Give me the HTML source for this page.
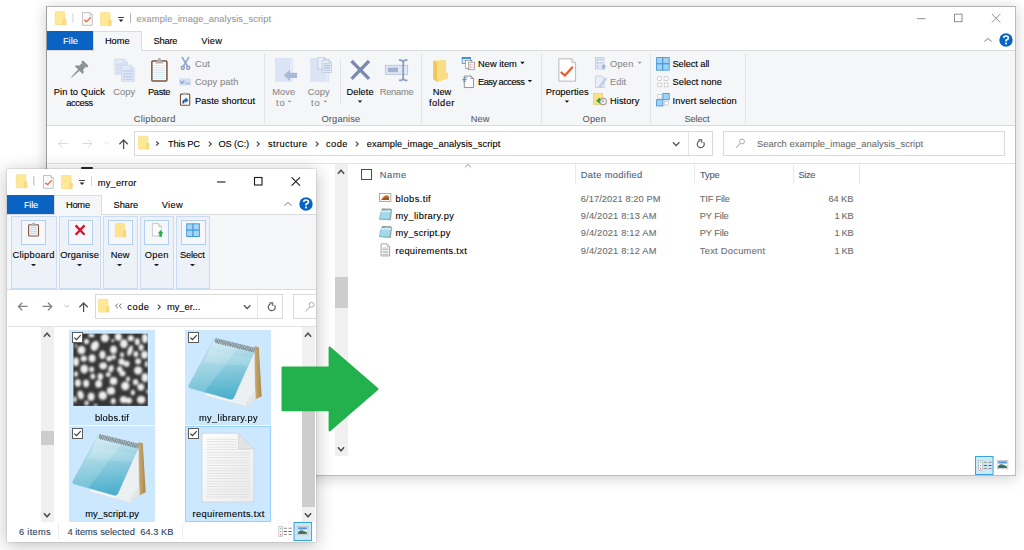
<!DOCTYPE html>
<html><head><meta charset="utf-8"><title>Explorer</title><style>
html,body{margin:0;padding:0;}
body{width:1024px;height:550px;background:#fff;position:relative;overflow:hidden;font-family:"Liberation Sans", sans-serif;font-size:12px;}
.a{position:absolute;box-sizing:border-box;}
.t{position:absolute;white-space:nowrap;line-height:14px;-webkit-text-stroke:0.1px currentColor;}
</style></head>
<body>
<div class="a" style="left:46px;top:6px;width:970px;height:470px;background:#fff;border:1px solid #bdbdbd;border-left-color:#9c9c9c;border-top-color:#b2b2b2;box-shadow:0 2px 14px 0 rgba(0,0,0,0.20);overflow:hidden;">
</div>
<span class="t" style="left:136.60px;top:12.03px;color:#999;font-size:9.3px;letter-spacing:0.097px;">example_image_analysis_script</span>
<svg class="a" style="left:0;top:0" width="1024" height="550" viewBox="0 0 1024 550" fill="none" stroke="#8f8f8f" stroke-width="1"><path d="M917 18.7 h8.5"/><rect x="954.5" y="14.2" width="7.5" height="7.5"/><path d="M992 14.0 l8.4 8.4 M1000.4 14.0 l-8.4 8.4"/></svg>
<svg class="a" style="left:997.7px;top:32.1px" width="16" height="16" viewBox="-8 -8 16 16"><circle r="6.7" fill="#0a63c2"/><path d="M-2.3 -1.9 Q-2.3 -4 0 -4 Q2.4 -4 2.4 -2 Q2.4 -0.6 0.1 0.2 V1.4" fill="none" stroke="#fff" stroke-width="1.7"/><circle cy="3.5" r="1.05" fill="#fff"/></svg>
<svg class="a" style="left:981.6px;top:34.1px" width="12" height="12" viewBox="-6 -6 12 12"><path d="M-3.6 1.6 L0 -1.6 L3.6 1.6" fill="none" stroke="#9a9a9a" stroke-width="1.1"/></svg>
<div class="a" style="left:47px;top:31px;width:46px;height:19px;background:#0a63c2;"></div>
<span class="t" style="left:62.90px;top:34.43px;color:#fff;font-size:9.3px;letter-spacing:0.004px;">File</span>
<div class="a" style="left:93px;top:31px;width:48.5px;height:20px;background:#f5f6f7;border:1px solid #dadbdc;border-bottom:none;z-index:2;"></div>
<span class="t" style="left:104.90px;top:34.43px;color:#000;font-size:9.3px;letter-spacing:-0.028px;z-index:3;">Home</span>
<span class="t" style="left:153.60px;top:34.43px;color:#000;font-size:9.3px;letter-spacing:-0.223px;">Share</span>
<span class="t" style="left:201.30px;top:34.43px;color:#000;font-size:9.3px;letter-spacing:0.229px;">View</span>
<div class="a" style="left:47px;top:50px;width:968px;height:76px;background:#f5f6f7;border-top:1px solid #dadbdc;border-bottom:1px solid #dadbdc;"></div>
<div class="a" style="left:263.5px;top:54px;width:1px;height:70px;background:#e2e3e4;"></div>
<div class="a" style="left:421px;top:54px;width:1px;height:70px;background:#e2e3e4;"></div>
<div class="a" style="left:540.5px;top:54px;width:1px;height:70px;background:#e2e3e4;"></div>
<div class="a" style="left:649.5px;top:54px;width:1px;height:70px;background:#e2e3e4;"></div>
<div class="a" style="left:744.5px;top:54px;width:1px;height:70px;background:#e2e3e4;"></div>
<div class="a" style="left:339.5px;top:59px;width:1px;height:45px;background:#e2e3e4;"></div>
<span class="t" style="left:53.75px;top:84.88px;color:#000;font-size:9.3px;letter-spacing:0.102px;">Pin to Quick</span>
<span class="t" style="left:66.25px;top:96.13px;color:#000;font-size:9.3px;letter-spacing:-0.431px;">access</span>
<span class="t" style="left:113.25px;top:84.88px;color:#8b8b8b;font-size:9.3px;letter-spacing:0.033px;">Copy</span>
<span class="t" style="left:148.00px;top:84.88px;color:#000;font-size:9.3px;letter-spacing:-0.336px;">Paste</span>
<span class="t" style="left:195.00px;top:56.88px;color:#8b8b8b;font-size:9.3px;letter-spacing:0.210px;">Cut</span>
<span class="t" style="left:195.00px;top:75.38px;color:#8b8b8b;font-size:9.3px;letter-spacing:0.134px;">Copy path</span>
<span class="t" style="left:195.00px;top:93.63px;color:#000;font-size:9.3px;letter-spacing:0.047px;">Paste shortcut</span>
<span class="t" style="left:133.75px;top:111.88px;color:#5f5f5f;font-size:9.3px;letter-spacing:0.228px;">Clipboard</span>
<span class="t" style="left:272.25px;top:84.88px;color:#8b8b8b;font-size:9.3px;letter-spacing:0.091px;">Move</span>
<span class="t" style="left:276.00px;top:96.13px;color:#8b8b8b;font-size:9.3px;letter-spacing:0.917px;">to</span>
<span class="t" style="left:307.75px;top:84.88px;color:#8b8b8b;font-size:9.3px;letter-spacing:0.033px;">Copy</span>
<span class="t" style="left:311.00px;top:96.13px;color:#8b8b8b;font-size:9.3px;letter-spacing:0.917px;">to</span>
<span class="t" style="left:346.50px;top:84.88px;color:#000;font-size:9.3px;letter-spacing:0.038px;">Delete</span>
<span class="t" style="left:379.75px;top:84.88px;color:#8b8b8b;font-size:9.3px;letter-spacing:-0.257px;">Rename</span>
<span class="t" style="left:321.50px;top:111.88px;color:#5f5f5f;font-size:9.3px;letter-spacing:0.139px;">Organise</span>
<span class="t" style="left:432.75px;top:84.88px;color:#000;font-size:9.3px;letter-spacing:-0.086px;">New</span>
<span class="t" style="left:429.00px;top:96.13px;color:#000;font-size:9.3px;letter-spacing:0.431px;">folder</span>
<span class="t" style="left:478.00px;top:56.88px;color:#000;font-size:9.3px;letter-spacing:0.013px;">New item</span>
<span class="t" style="left:478.00px;top:75.38px;color:#000;font-size:9.3px;letter-spacing:-0.531px;">Easy access</span>
<span class="t" style="left:470.75px;top:111.88px;color:#5f5f5f;font-size:9.3px;letter-spacing:-0.003px;">New</span>
<span class="t" style="left:545.75px;top:84.88px;color:#000;font-size:9.3px;letter-spacing:0.048px;">Properties</span>
<span class="t" style="left:610.00px;top:56.88px;color:#8b8b8b;font-size:9.3px;letter-spacing:0.213px;">Open</span>
<span class="t" style="left:610.00px;top:75.38px;color:#8b8b8b;font-size:9.3px;letter-spacing:0.017px;">Edit</span>
<span class="t" style="left:610.00px;top:93.63px;color:#000;font-size:9.3px;letter-spacing:0.059px;">History</span>
<span class="t" style="left:582.50px;top:111.88px;color:#5f5f5f;font-size:9.3px;letter-spacing:0.213px;">Open</span>
<span class="t" style="left:672.50px;top:56.88px;color:#000;font-size:9.3px;letter-spacing:-0.088px;">Select all</span>
<span class="t" style="left:672.50px;top:75.38px;color:#000;font-size:9.3px;letter-spacing:0.022px;">Select none</span>
<span class="t" style="left:672.50px;top:93.63px;color:#000;font-size:9.3px;letter-spacing:0.114px;">Invert selection</span>
<span class="t" style="left:684.50px;top:111.88px;color:#5f5f5f;font-size:9.3px;letter-spacing:-0.166px;">Select</span>
<svg class="a" style="left:60px;top:52px;" width="140" height="60" viewBox="0 0 1024 439"><g transform="translate(182,88) rotate(45)" fill="#8a9398">
<rect x="-29" y="-9" width="58" height="19" rx="4"/>
<path d="M-18 8 L18 8 L22 46 L-22 46 Z"/>
<path d="M-40 64 Q-40 42 -22 42 L22 42 Q40 42 40 64 Z"/>
<path d="M-7 62 H7 L3 140 H-3 Z"/>
</g><path d="M402 52 H468 L494 78 V164 H402 Z" fill="#e3eaf7" stroke="#b5c3e0" stroke-width="3" stroke-linejoin="round"/><path d="M468 52 V78 H494" fill="none" stroke="#b5c3e0" stroke-width="3" stroke-linejoin="round"/><rect x="411" y="86.0" width="74" height="5.4" fill="#c7d3ea"/><rect x="411" y="98.0" width="74" height="5.4" fill="#c7d3ea"/><rect x="411" y="110.0" width="74" height="5.4" fill="#c7d3ea"/><rect x="411" y="122.0" width="74" height="5.4" fill="#c7d3ea"/><rect x="411" y="134.0" width="74" height="5.4" fill="#c7d3ea"/><rect x="411" y="146.0" width="74" height="5.4" fill="#c7d3ea"/><path d="M450 97 H518 L544 123 V215 H450 Z" fill="#e3eaf7" stroke="#b5c3e0" stroke-width="3" stroke-linejoin="round"/><path d="M518 97 V123 H544" fill="none" stroke="#b5c3e0" stroke-width="3" stroke-linejoin="round"/><rect x="459" y="131.0" width="76" height="5.0" fill="#bccae6"/><rect x="459" y="142.1" width="76" height="5.0" fill="#bccae6"/><rect x="459" y="153.3" width="76" height="5.0" fill="#bccae6"/><rect x="459" y="164.4" width="76" height="5.0" fill="#bccae6"/><rect x="459" y="175.6" width="76" height="5.0" fill="#bccae6"/><rect x="459" y="186.7" width="76" height="5.0" fill="#bccae6"/><rect x="459" y="197.9" width="76" height="5.0" fill="#bccae6"/><rect x="672" y="66" width="110" height="146" rx="7" fill="#fff" stroke="#7d5138" stroke-width="11"/><rect x="682" y="80" width="90" height="120" fill="#fdfeff"/><rect x="684" y="96.0" width="86" height="4" fill="#b9d6f0"/><rect x="684" y="109.5" width="86" height="4" fill="#b9d6f0"/><rect x="684" y="123.0" width="86" height="4" fill="#b9d6f0"/><rect x="684" y="136.5" width="86" height="4" fill="#b9d6f0"/><rect x="684" y="150.0" width="86" height="4" fill="#b9d6f0"/><rect x="684" y="163.5" width="86" height="4" fill="#b9d6f0"/><rect x="684" y="177.0" width="86" height="4" fill="#b9d6f0"/><rect x="684" y="190.5" width="86" height="4" fill="#b9d6f0"/><path d="M700 82 V66 H714 L720 46 H734 L740 66 H754 V82 Z" fill="#b4b4b4" stroke="#8f8f8f" stroke-width="2"/><g fill="none" stroke="#8ea3cd" stroke-width="11" stroke-linecap="round"><path d="M894 40 L934 106"/><path d="M942 40 L902 106"/><ellipse cx="898" cy="116" rx="11" ry="12"/><ellipse cx="938" cy="116" rx="11" ry="12"/></g><rect x="873" y="193" width="84" height="52" fill="#d3def3"/><path d="M881 206 l6 26 l6 -18 l6 18 l6 -26" fill="none" stroke="#7f96c6" stroke-width="5"/><rect x="911" y="214" width="8" height="4" fill="#7f96c6"/><g fill="#7f96c6"><rect x="917" y="226" width="7" height="7"/><rect x="929" y="226" width="7" height="7"/><rect x="941" y="226" width="7" height="7"/></g><rect x="881" y="308" width="68" height="82" rx="6" fill="#fff" stroke="#7a4e35" stroke-width="8"/><path d="M898 314 V304 Q915 294 932 304 V314 Z" fill="#b9b9b9" stroke="#8a8a8a" stroke-width="2"/><rect x="894" y="326" width="42" height="52" fill="#f4f8fd"/><path d="M894 376 Q894 346 918 346 V333 L939 353 L918 373 V360 Q908 360 908 376 Z" fill="#2358b8"/></svg>
<svg class="a" style="left:170px;top:52px;" width="140" height="60" viewBox="0 0 1024 439"><rect x="770" y="47" width="126" height="168" fill="#dbe4f4" stroke="#cfdaef" stroke-width="3"/><rect x="880" y="47" width="14" height="168" fill="#e6ecf8"/><path d="M832 170 L878 130 V152 H930 V190 H878 V212 Z" fill="#a9b9d8"/><path d="M860 356 h28 l-14 14 z" fill="#8c8c8c"/></svg>
<svg class="a" style="left:290px;top:52px;" width="140" height="60" viewBox="0 0 1024 439"><rect x="150" y="47" width="134" height="168" fill="#dbe4f4" stroke="#cfdaef" stroke-width="3"/><rect x="262" y="47" width="14" height="168" fill="#e6ecf8"/><path d="M203 40 H251 L267 56 V126 H203 Z" fill="#e9eef9" stroke="#a9b8d6" stroke-width="4" stroke-linejoin="round"/><path d="M251 40 V56 H267" fill="none" stroke="#a9b8d6" stroke-width="4" stroke-linejoin="round"/><path d="M236 60 H288 L304 76 V150 H236 Z" fill="#e9eef9" stroke="#a9b8d6" stroke-width="4" stroke-linejoin="round"/><path d="M288 60 V76 H304" fill="none" stroke="#a9b8d6" stroke-width="4" stroke-linejoin="round"/><rect x="245" y="84.0" width="50" height="5.4" fill="#a9b8d6"/><rect x="245" y="96.0" width="50" height="5.4" fill="#a9b8d6"/><rect x="245" y="108.0" width="50" height="5.4" fill="#a9b8d6"/><rect x="245" y="120.0" width="50" height="5.4" fill="#a9b8d6"/><rect x="245" y="132.0" width="50" height="5.4" fill="#a9b8d6"/><path d="M244 356 h28 l-14 14 z" fill="#8c8c8c"/><path d="M450 66 L578 197 M578 66 L450 197" stroke="#7b8bb0" stroke-width="24" fill="none"/><path d="M496 354 h32 l-16 17 z" fill="#111"/><rect x="697" y="97" width="164" height="68" fill="#e0e8f6" stroke="#a9b9d8" stroke-width="5"/><rect x="716" y="114" width="74" height="34" fill="#a3b3d4"/><path d="M797 58 Q828 58 828 80 Q828 58 859 58 M828 78 V190 M797 208 Q828 208 828 188 Q828 208 859 208" fill="none" stroke="#8c9dc2" stroke-width="13"/></svg>
<svg class="a" style="left:420px;top:52px;" width="140" height="60" viewBox="0 0 1024 439"><defs><linearGradient id="fg" x1="0" y1="0" x2="1" y2="1"><stop offset="0" stop-color="#fce59a"/><stop offset="1" stop-color="#f2cb5e"/></linearGradient></defs><path d="M97 62 L187 59 L190 150 L205 157 L204 192 L125 219 L97 197 Z" fill="url(#fg)"/><path d="M97 62 L126 76 L125 219 L97 197 Z" fill="#efc85a"/><path d="M126 76 L187 59 L190 150 L205 157 L204 192 L125 219 Z" fill="#f9dd85" opacity="0.9"/><rect x="308" y="40" width="62" height="44" fill="#d9ecfa" stroke="#2e7fc0" stroke-width="5"/><rect x="308" y="40" width="62" height="10" fill="#2e7fc0"/><rect x="333" y="62" width="46" height="58" fill="#fff" stroke="#6d6d6d" stroke-width="4"/><rect x="354" y="74" width="46" height="56" fill="#fff" stroke="#6d6d6d" stroke-width="4"/><path d="M368 78 V126 M358 90 H396 M358 102 H396 M358 114 H396" stroke="#e58a8a" stroke-width="3" fill="none"/><path d="M733 72 h32 l-16 17 z" fill="#111"/><path d="M324 176 H372 L391 194 V260 H324 Z" fill="#fff" stroke="#555" stroke-width="4.5" stroke-linejoin="round"/><path d="M372 176 V194 H391" fill="none" stroke="#555" stroke-width="4"/><path d="M318 190 H348 M308 202 H342 M314 214 H336" stroke="#2b6fc0" stroke-width="5" fill="none"/><path d="M788 204 h32 l-16 17 z" fill="#111"/></svg>
<svg class="a" style="left:540px;top:52px;" width="140" height="60" viewBox="0 0 1024 439"><path d="M138 50 H232 L260 78 V213 H138 Z" fill="#fff" stroke="#9b9b9b" stroke-width="5" stroke-linejoin="round"/><path d="M232 50 V78 H260" fill="#eee" stroke="#9b9b9b" stroke-width="4"/><path d="M152 146 L182 172 L240 108" fill="none" stroke="#e8582b" stroke-width="15"/><path d="M181 354 h32 l-16 17 z" fill="#111"/><rect x="406" y="40" width="62" height="84" fill="#e3eaf7" stroke="#b5c3e0" stroke-width="5"/><g fill="#a3b3d4"><rect x="416" y="52" width="10" height="10"/><rect x="416" y="76" width="10" height="10"/><rect x="416" y="100" width="10" height="10"/><rect x="434" y="54" width="26" height="5"/><rect x="434" y="78" width="20" height="5"/></g><path d="M466 88 L486 110 H474 V128 H458 V110 H446 Z" fill="#a3b3d4"/><path d="M714 72 h30 l-15 15 z" fill="#9c9c9c"/><path d="M406 176 H452 L470 194 V260 H406 Z" fill="#e9eef9" stroke="#b5c3e0" stroke-width="5" stroke-linejoin="round"/><path d="M430 252 L478 188 L488 196 L442 258 Z" fill="#c4d0ea" stroke="#a3b3d4" stroke-width="3"/><rect x="392" y="302" width="66" height="82" fill="#fbdf86" stroke="#e9c452" stroke-width="4"/><path d="M412 356 L436 334 V348 Q462 346 468 366 Q452 356 436 362 V378 Z" fill="#27a844"/><circle cx="462" cy="362" r="25" fill="#f2f2f2" stroke="#777" stroke-width="6"/><path d="M462 346 V364 H450" fill="none" stroke="#666" stroke-width="4"/><path d="M414 354 L438 334 V346 Q452 346 452 356 Q446 352 438 354 V374 Z" fill="#27a844"/><rect x="853" y="41" width="46" height="46" fill="#a3d1f4" stroke="#3492dc" stroke-width="6"/><rect x="899" y="41" width="46" height="46" fill="#a3d1f4" stroke="#3492dc" stroke-width="6"/><rect x="853" y="87" width="46" height="46" fill="#a3d1f4" stroke="#3492dc" stroke-width="6"/><rect x="899" y="87" width="46" height="46" fill="#a3d1f4" stroke="#3492dc" stroke-width="6"/><rect x="862" y="181" width="28" height="28" fill="#fdfdfd" stroke="#b4b4b4" stroke-width="4"/><rect x="908" y="181" width="28" height="28" fill="#fdfdfd" stroke="#b4b4b4" stroke-width="4"/><rect x="862" y="227" width="28" height="28" fill="#fdfdfd" stroke="#b4b4b4" stroke-width="4"/><rect x="908" y="227" width="28" height="28" fill="#fdfdfd" stroke="#b4b4b4" stroke-width="4"/><rect x="862" y="312" width="26" height="26" fill="#fdfdfd" stroke="#b4b4b4" stroke-width="4"/><rect x="899" y="303" width="46" height="46" fill="#a3d1f4" stroke="#3492dc" stroke-width="6"/><rect x="853" y="349" width="46" height="46" fill="#a3d1f4" stroke="#3492dc" stroke-width="6"/><rect x="912" y="362" width="26" height="26" fill="#fdfdfd" stroke="#b4b4b4" stroke-width="4"/></svg>
<svg class="a" style="left:46px;top:6px;" width="100" height="25" viewBox="0 0 1024 256"><rect x="94" y="58" width="98" height="134" rx="5" fill="#ffe896" stroke="#f3d26f" stroke-width="5"/><rect x="178" y="136" width="28" height="56" rx="4" fill="#fbdc7e" stroke="#f0cc62" stroke-width="4"/><rect x="272" y="75" width="7" height="96" fill="#c4c4c4"/><path d="M374 67 H450 L474 91 V198 H374 Z" fill="#fafafa" stroke="#9a9a9a" stroke-width="6" stroke-linejoin="round"/><path d="M450 67 V91 H474" fill="#e8e8e8" stroke="#9a9a9a" stroke-width="5"/><path d="M392 142 L416 160 L458 116" fill="none" stroke="#ee6a3a" stroke-width="14"/><rect x="558" y="66" width="98" height="134" rx="5" fill="#ffe896" stroke="#f3d26f" stroke-width="5"/><rect x="642" y="144" width="28" height="56" rx="4" fill="#fbdc7e" stroke="#f0cc62" stroke-width="4"/><rect x="738" y="113" width="60" height="9" fill="#222"/><path d="M744 138 H792 L768 164 Z" fill="#222"/><rect x="862" y="75" width="7" height="96" fill="#8f8f8f"/></svg>
<div class="a" style="left:134px;top:131px;width:579px;height:25px;background:#fff;border:1px solid #d9d9d9;"></div>
<div class="a" style="left:687.5px;top:132px;width:1px;height:23px;background:#e5e5e5;"></div>
<span class="t" style="left:168.00px;top:137.13px;color:#000;font-size:9.3px;letter-spacing:-0.173px;">This PC</span>
<span class="t" style="left:218.50px;top:137.13px;color:#000;font-size:9.3px;letter-spacing:-0.131px;">OS (C:)</span>
<span class="t" style="left:268.00px;top:137.13px;color:#000;font-size:9.3px;letter-spacing:0.381px;">structure</span>
<span class="t" style="left:326.00px;top:137.13px;color:#000;font-size:9.3px;letter-spacing:0.420px;">code</span>
<span class="t" style="left:366.75px;top:137.13px;color:#000;font-size:9.3px;letter-spacing:0.063px;">example_image_analysis_script</span>
<div class="a" style="left:723px;top:131px;width:282px;height:25px;background:#fff;border:1px solid #d9d9d9;"></div>
<span class="t" style="left:757.00px;top:137.13px;color:#6d6d6d;font-size:9.3px;letter-spacing:0.064px;">Search example_image_analysis_script</span>
<svg class="a" style="left:50px;top:128px;" width="120" height="30" viewBox="0 0 1024 256"><path d="M150 132 H72 M104 100 L72 132 L104 164" fill="none" stroke="#d8d8d8" stroke-width="8"/><path d="M278 132 H356 M324 100 L356 132 L324 164" fill="none" stroke="#d8d8d8" stroke-width="8"/><path d="M463 119 L484 138 L505 119" fill="none" stroke="#d8d8d8" stroke-width="6" opacity="0.8"/><path d="M628 180 V102 M592 138 L628 102 L664 138" fill="none" stroke="#505050" stroke-width="11"/><rect x="755" y="70" width="80" height="110" rx="4" fill="#ffe896" stroke="#f3d26f" stroke-width="4"/><rect x="823" y="132" width="22" height="48" rx="3" fill="#fbdc7e" stroke="#f0cc62" stroke-width="3"/><path d="M906 115 L926 132 L906 149" fill="none" stroke="#484848" stroke-width="9.5"/></svg>
<svg class="a" style="left:206.5px;top:139.5px" width="6" height="8" viewBox="0 0 6 8"><path d="M1.8 1.6 L4.3 4 L1.8 6.4" fill="none" stroke="#484848" stroke-width="1.15"/></svg>
<svg class="a" style="left:254.5px;top:139.5px" width="6" height="8" viewBox="0 0 6 8"><path d="M1.8 1.6 L4.3 4 L1.8 6.4" fill="none" stroke="#484848" stroke-width="1.15"/></svg>
<svg class="a" style="left:313.5px;top:139.5px" width="6" height="8" viewBox="0 0 6 8"><path d="M1.8 1.6 L4.3 4 L1.8 6.4" fill="none" stroke="#484848" stroke-width="1.15"/></svg>
<svg class="a" style="left:353.5px;top:139.5px" width="6" height="8" viewBox="0 0 6 8"><path d="M1.8 1.6 L4.3 4 L1.8 6.4" fill="none" stroke="#484848" stroke-width="1.15"/></svg>
<svg class="a" style="left:660px;top:128px;" width="120" height="30" viewBox="0 0 1024 256"><path d="M110 122 L138 150 L166 122" fill="none" stroke="#555" stroke-width="11"/><path d="M346 108 A30 30 0 1 0 372 120" fill="none" stroke="#5e5e5e" stroke-width="10"/><path d="M328 100 H356 V128" fill="none" stroke="#5e5e5e" stroke-width="9"/><circle cx="700" cy="115" r="21" fill="none" stroke="#8a8a9a" stroke-width="6"/><path d="M685 132 L648 171" stroke="#8a8a9a" stroke-width="7" fill="none"/></svg>
<div class="a" style="left:47px;top:163px;width:968px;height:1px;background:#e3e3e3;"></div>
<div class="a" style="left:81px;top:167.4px;width:11.5px;height:1.4px;background:#2a2a2a;border-radius:1px;"></div>
<div class="a" style="left:335px;top:164px;width:12.5px;height:292px;background:#f0f0f0;"></div>
<div class="a" style="left:335px;top:277px;width:12.5px;height:31px;background:#cdcdcd;"></div>
<div class="a" style="left:575px;top:164px;width:1px;height:20px;background:#e9e9e9;"></div>
<div class="a" style="left:693.5px;top:164px;width:1px;height:20px;background:#e9e9e9;"></div>
<div class="a" style="left:792.5px;top:164px;width:1px;height:20px;background:#e9e9e9;"></div>
<div class="a" style="left:858.5px;top:164px;width:1px;height:20px;background:#e9e9e9;"></div>
<div class="a" style="left:360.5px;top:169px;width:11px;height:11px;background:#fff;border:1px solid #4d4d4d;"></div>
<span class="t" style="left:379.75px;top:167.63px;color:#4c607a;font-size:9.3px;letter-spacing:0.509px;">Name</span>
<span class="t" style="left:580.75px;top:167.63px;color:#4c607a;font-size:9.3px;letter-spacing:0.344px;">Date modified</span>
<span class="t" style="left:700.00px;top:167.63px;color:#4c607a;font-size:9.3px;letter-spacing:-0.139px;">Type</span>
<span class="t" style="left:798.50px;top:167.63px;color:#4c607a;font-size:9.3px;letter-spacing:-0.373px;">Size</span>
<span class="t" style="left:395.50px;top:191.53px;color:#000;font-size:9.3px;letter-spacing:0.395px;">blobs.tif</span>
<span class="t" style="left:580.80px;top:191.53px;color:#6d6d6d;font-size:9.3px;letter-spacing:0.072px;">6/17/2021 8:20 PM</span>
<span class="t" style="left:699.80px;top:191.53px;color:#6d6d6d;font-size:9.3px;letter-spacing:-0.214px;">TIF File</span>
<span class="t" style="left:828.50px;top:191.53px;color:#6d6d6d;font-size:9.3px;letter-spacing:-0.106px;">64 KB</span>
<span class="t" style="left:395.50px;top:208.93px;color:#000;font-size:9.3px;letter-spacing:0.308px;">my_library.py</span>
<span class="t" style="left:580.80px;top:208.93px;color:#6d6d6d;font-size:9.3px;letter-spacing:0.182px;">9/4/2021 8:13 AM</span>
<span class="t" style="left:699.80px;top:208.93px;color:#6d6d6d;font-size:9.3px;letter-spacing:-0.145px;">PY File</span>
<span class="t" style="left:834.50px;top:208.93px;color:#6d6d6d;font-size:9.3px;letter-spacing:-0.339px;">1 KB</span>
<span class="t" style="left:395.50px;top:226.13px;color:#000;font-size:9.3px;letter-spacing:0.243px;">my_script.py</span>
<span class="t" style="left:580.80px;top:226.13px;color:#6d6d6d;font-size:9.3px;letter-spacing:0.182px;">9/4/2021 8:12 AM</span>
<span class="t" style="left:699.80px;top:226.13px;color:#6d6d6d;font-size:9.3px;letter-spacing:-0.145px;">PY File</span>
<span class="t" style="left:834.50px;top:226.13px;color:#6d6d6d;font-size:9.3px;letter-spacing:-0.339px;">1 KB</span>
<span class="t" style="left:395.50px;top:243.53px;color:#000;font-size:9.3px;letter-spacing:0.309px;">requirements.txt</span>
<span class="t" style="left:580.80px;top:243.53px;color:#6d6d6d;font-size:9.3px;letter-spacing:0.182px;">9/4/2021 8:12 AM</span>
<span class="t" style="left:699.80px;top:243.53px;color:#6d6d6d;font-size:9.3px;letter-spacing:0.276px;">Text Document</span>
<span class="t" style="left:834.50px;top:243.53px;color:#6d6d6d;font-size:9.3px;letter-spacing:-0.339px;">1 KB</span>
<svg class="a" style="left:374px;top:188px;" width="60" height="72" viewBox="0 0 458 550"><rect x="42" y="42" width="87" height="60" fill="#fdfdfd" stroke="#858585" stroke-width="5"/><path d="M58 88 Q70 58 100 56 Q112 58 116 70 L112 88 Z" fill="#e8632c"/><path d="M58 90 L84 70 L112 74 L116 90 Z" fill="#8a5a2c"/><path d="M88 70 L116 62 L116 78 Z" fill="#56a83a"/><rect x="56" y="86" width="60" height="6" fill="#c43a2a"/><path d="M62 166 L134 166 L126 244 L44 238 Z" fill="#cfc3a0" stroke="#6e6e6e" stroke-width="4"/><path d="M58 164 L130 164 L120 240 L40 236 Z" fill="#a3d9ea" stroke="#62aac4" stroke-width="4"/><path d="M58 164 L130 164 L127 186 L53 186 Z" fill="#c8eaf4"/><rect x="62.0" y="156" width="4.5" height="14" fill="#666"/><rect x="70.5" y="156" width="4.5" height="14" fill="#666"/><rect x="79.0" y="156" width="4.5" height="14" fill="#666"/><rect x="87.5" y="156" width="4.5" height="14" fill="#666"/><rect x="96.0" y="156" width="4.5" height="14" fill="#666"/><rect x="104.5" y="156" width="4.5" height="14" fill="#666"/><rect x="113.0" y="156" width="4.5" height="14" fill="#666"/><rect x="121.5" y="156" width="4.5" height="14" fill="#666"/><path d="M62 300 L134 300 L126 378 L44 372 Z" fill="#cfc3a0" stroke="#6e6e6e" stroke-width="4"/><path d="M58 298 L130 298 L120 374 L40 370 Z" fill="#a3d9ea" stroke="#62aac4" stroke-width="4"/><path d="M58 298 L130 298 L127 320 L53 320 Z" fill="#c8eaf4"/><rect x="62.0" y="290" width="4.5" height="14" fill="#666"/><rect x="70.5" y="290" width="4.5" height="14" fill="#666"/><rect x="79.0" y="290" width="4.5" height="14" fill="#666"/><rect x="87.5" y="290" width="4.5" height="14" fill="#666"/><rect x="96.0" y="290" width="4.5" height="14" fill="#666"/><rect x="104.5" y="290" width="4.5" height="14" fill="#666"/><rect x="113.0" y="290" width="4.5" height="14" fill="#666"/><rect x="121.5" y="290" width="4.5" height="14" fill="#666"/><path d="M54 427 H100 L119 446 V519 H54 Z" fill="#fff" stroke="#7a7a7a" stroke-width="5" stroke-linejoin="round"/><path d="M100 427 V446 H119" fill="#eee" stroke="#8a8a8a" stroke-width="3.5"/><rect x="64" y="456" width="46" height="5.5" fill="#a8a8a8"/><rect x="64" y="468" width="46" height="5.5" fill="#a8a8a8"/><rect x="64" y="480" width="46" height="5.5" fill="#a8a8a8"/><rect x="64" y="492" width="46" height="5.5" fill="#a8a8a8"/><rect x="64" y="504" width="46" height="5.5" fill="#a8a8a8"/></svg>
<svg class="a" style="left:966px;top:450px;" width="50" height="30" viewBox="0 0 917 550"><rect x="174" y="119" width="322" height="330" fill="#cce8f7" stroke="#35a3dc" stroke-width="18"/><rect x="236" y="189" width="66" height="188" fill="#fbfbfb" stroke="#9a9a9a" stroke-width="9"/><circle cx="268" cy="228" r="12" fill="#7bb48a"/><circle cx="268" cy="285" r="12" fill="#5b8cf0"/><circle cx="268" cy="342" r="12" fill="#e8505a"/><rect x="326" y="217" width="58" height="18" rx="4" fill="#8f8f8f"/><rect x="412" y="217" width="58" height="18" rx="4" fill="#8f8f8f"/><rect x="326" y="276" width="58" height="18" rx="4" fill="#5f5f5f"/><rect x="412" y="276" width="58" height="18" rx="4" fill="#5f5f5f"/><rect x="326" y="332" width="58" height="18" rx="4" fill="#8f8f8f"/><rect x="412" y="332" width="58" height="18" rx="4" fill="#8f8f8f"/><rect x="572" y="189" width="196" height="156" fill="#fff" stroke="#a5a5a5" stroke-width="10"/><rect x="590" y="207" width="160" height="40" fill="#4d96ea"/><path d="M590 312 Q600 250 660 262 Q720 276 750 300 V327 H590 Z" fill="#3f7f5a"/><path d="M590 300 Q640 290 700 310 L750 318 V327 H590 Z" fill="#2b5f8f"/></svg>
<svg class="a" style="left:335.2px;top:165.8px" width="12" height="12" viewBox="-6 -6 12 12"><path d="M-3.1 1.7 L0 -1.7 L3.1 1.7" fill="none" stroke="#505050" stroke-width="1.6"/></svg>
<svg class="a" style="left:335.2px;top:443px" width="12" height="12" viewBox="-6 -6 12 12"><path d="M-3.1 -1.7 L0 1.7 L3.1 -1.7" fill="none" stroke="#505050" stroke-width="1.6"/></svg>
<svg class="a" style="left:461.8px;top:160px" width="12" height="12" viewBox="-6 -6 12 12"><path d="M-3.2 1.5 L0 -1.5 L3.2 1.5" fill="none" stroke="#9a9a9a" stroke-width="1"/></svg>
<div class="a" style="left:7px;top:169px;width:309px;height:373px;background:#fff;box-shadow:0 0 1px rgba(0,0,0,0.45),0 3px 16px 1px rgba(0,0,0,0.24);"></div>
<span class="t" style="left:97.70px;top:176.13px;color:#000;font-size:9.3px;letter-spacing:0.212px;">my_error</span>
<svg class="a" style="left:6.6px;top:169.3px;" width="100.0" height="25.0" viewBox="0 0 1024 256"><rect x="94" y="58" width="98" height="134" rx="5" fill="#ffe896" stroke="#f3d26f" stroke-width="5"/><rect x="178" y="136" width="28" height="56" rx="4" fill="#fbdc7e" stroke="#f0cc62" stroke-width="4"/><rect x="272" y="75" width="7" height="96" fill="#8f8f8f"/><path d="M374 67 H450 L474 91 V198 H374 Z" fill="#fafafa" stroke="#9a9a9a" stroke-width="6" stroke-linejoin="round"/><path d="M450 67 V91 H474" fill="#e8e8e8" stroke="#9a9a9a" stroke-width="5"/><path d="M392 142 L416 160 L458 116" fill="none" stroke="#ee6a3a" stroke-width="14"/><rect x="558" y="66" width="98" height="134" rx="5" fill="#ffe896" stroke="#f3d26f" stroke-width="5"/><rect x="642" y="144" width="28" height="56" rx="4" fill="#fbdc7e" stroke="#f0cc62" stroke-width="4"/><rect x="738" y="113" width="60" height="9" fill="#222"/><path d="M744 138 H792 L768 164 Z" fill="#222"/><rect x="862" y="75" width="7" height="96" fill="#bdbdbd"/></svg>
<svg class="a" style="left:0;top:0" width="1024" height="550" viewBox="0 0 1024 550" fill="none" stroke="#1a1a1a" stroke-width="1.1"><path d="M217 182.0 h8.5"/><rect x="254.5" y="177.5" width="7.5" height="7.5"/><path d="M291.6 177.3 l8.4 8.4 M300.0 177.3 l-8.4 8.4"/></svg>
<svg class="a" style="left:297.7px;top:196px" width="16" height="16" viewBox="-8 -8 16 16"><circle r="6.7" fill="#0a63c2"/><path d="M-2.3 -1.9 Q-2.3 -4 0 -4 Q2.4 -4 2.4 -2 Q2.4 -0.6 0.1 0.2 V1.4" fill="none" stroke="#fff" stroke-width="1.7"/><circle cy="3.5" r="1.05" fill="#fff"/></svg>
<svg class="a" style="left:281.5px;top:198px" width="12" height="12" viewBox="-6 -6 12 12"><path d="M-3.6 1.6 L0 -1.6 L3.6 1.6" fill="none" stroke="#9a9a9a" stroke-width="1.1"/></svg>
<div class="a" style="left:7px;top:195px;width:46.5px;height:18.5px;background:#0a63c2;"></div>
<span class="t" style="left:23.90px;top:198.43px;color:#fff;font-size:9.3px;letter-spacing:-0.196px;">File</span>
<div class="a" style="left:53.5px;top:195px;width:48px;height:19.5px;background:#f5f6f7;border:1px solid #dadbdc;border-bottom:none;z-index:2;"></div>
<span class="t" style="left:65.90px;top:198.43px;color:#000;font-size:9.3px;letter-spacing:-0.203px;z-index:3;">Home</span>
<span class="t" style="left:113.60px;top:198.43px;color:#000;font-size:9.3px;letter-spacing:-0.062px;">Share</span>
<span class="t" style="left:161.80px;top:198.43px;color:#000;font-size:9.3px;letter-spacing:0.279px;">View</span>
<div class="a" style="left:7px;top:213.5px;width:309px;height:76px;background:#f5f6f7;border-top:1px solid #dadbdc;border-bottom:1px solid #dadbdc;"></div>
<div class="a" style="left:11.3px;top:216px;width:45.3px;height:72.5px;background:#edf2f9;border:1px solid #c9dcf4;"></div>
<div class="a" style="left:21.1px;top:220px;width:25px;height:24.8px;background:#f5f7fb;border:1px solid #b3d0f3;"></div>
<span class="t" style="left:12.50px;top:247.93px;color:#000;font-size:9.3px;letter-spacing:0.256px;">Clipboard</span>
<svg class="a" style="left:30.700000000000003px;top:263.9px;" width="5" height="2.6" viewBox="0 0 5 2.6"><path d="M0 0h5l-2.5 2.6z" fill="#222"/></svg>
<div class="a" style="left:58.6px;top:216px;width:42.800000000000004px;height:72.5px;background:#edf2f9;border:1px solid #c9dcf4;"></div>
<div class="a" style="left:67.5px;top:220px;width:25px;height:24.8px;background:#f5f7fb;border:1px solid #b3d0f3;"></div>
<span class="t" style="left:60.20px;top:247.93px;color:#000;font-size:9.3px;letter-spacing:0.133px;">Organise</span>
<svg class="a" style="left:77.0px;top:263.9px;" width="5" height="2.6" viewBox="0 0 5 2.6"><path d="M0 0h5l-2.5 2.6z" fill="#222"/></svg>
<div class="a" style="left:103.3px;top:216px;width:34.39999999999999px;height:72.5px;background:#edf2f9;border:1px solid #c9dcf4;"></div>
<div class="a" style="left:108.2px;top:220px;width:25px;height:24.8px;background:#f5f7fb;border:1px solid #b3d0f3;"></div>
<span class="t" style="left:110.70px;top:247.93px;color:#000;font-size:9.3px;letter-spacing:0.097px;">New</span>
<svg class="a" style="left:117.4px;top:263.9px;" width="5" height="2.6" viewBox="0 0 5 2.6"><path d="M0 0h5l-2.5 2.6z" fill="#222"/></svg>
<div class="a" style="left:139.5px;top:216px;width:34.099999999999994px;height:72.5px;background:#edf2f9;border:1px solid #c9dcf4;"></div>
<div class="a" style="left:144.3px;top:220px;width:25px;height:24.8px;background:#f5f7fb;border:1px solid #b3d0f3;"></div>
<span class="t" style="left:144.80px;top:247.93px;color:#000;font-size:9.3px;letter-spacing:0.312px;">Open</span>
<svg class="a" style="left:153.75px;top:263.9px;" width="5" height="2.6" viewBox="0 0 5 2.6"><path d="M0 0h5l-2.5 2.6z" fill="#222"/></svg>
<div class="a" style="left:175.6px;top:216px;width:34.20000000000002px;height:72.5px;background:#edf2f9;border:1px solid #c9dcf4;"></div>
<div class="a" style="left:180.5px;top:220px;width:25px;height:24.8px;background:#f5f7fb;border:1px solid #b3d0f3;"></div>
<span class="t" style="left:180.00px;top:247.93px;color:#000;font-size:9.3px;letter-spacing:-0.207px;">Select</span>
<svg class="a" style="left:190.1px;top:263.9px;" width="5" height="2.6" viewBox="0 0 5 2.6"><path d="M0 0h5l-2.5 2.6z" fill="#222"/></svg>
<svg class="a" style="left:8px;top:214px;" width="120" height="60" viewBox="0 0 1024 512"><rect x="176" y="92" width="84" height="96" rx="7" fill="#fff" stroke="#80543a" stroke-width="10"/><rect x="187" y="104" width="62" height="74" fill="#eaf3fb"/><rect x="188" y="112" width="60" height="7" fill="#b9d6f0"/><rect x="188" y="129" width="60" height="7" fill="#b9d6f0"/><rect x="188" y="146" width="60" height="7" fill="#b9d6f0"/><rect x="188" y="163" width="60" height="7" fill="#b9d6f0"/><path d="M198 100 V86 H206 L210 76 H226 L230 86 H238 V100 Z" fill="#b4b4b4" stroke="#8a8a8a" stroke-width="2"/><path d="M577 97 L653 177 M653 97 L577 177" stroke="#d8112c" stroke-width="19" fill="none"/><rect x="916" y="80" width="80" height="114" rx="5" fill="#ffe48f" stroke="#f3d26f" stroke-width="4"/><rect x="984" y="142" width="22" height="52" rx="3" fill="#fbd874" stroke="#efc85c" stroke-width="3"/></svg>
<svg class="a" style="left:100px;top:214px;" width="120" height="60" viewBox="0 0 1024 512"><path d="M447 82 H500 L524 106 V188 H447 Z" fill="#fbfbfb" stroke="#a8a8a8" stroke-width="5" stroke-linejoin="round"/><path d="M500 82 V106 H524" fill="#e9e9e9" stroke="#a8a8a8" stroke-width="4"/><path d="M517 138 L542 166 H528 V194 H506 V166 H492 Z" fill="#1fb141"/><rect x="740" y="84" width="54" height="54" fill="#a9d4f5" stroke="#3a96de" stroke-width="8"/><rect x="794" y="84" width="54" height="54" fill="#a9d4f5" stroke="#3a96de" stroke-width="8"/><rect x="740" y="138" width="54" height="54" fill="#a9d4f5" stroke="#3a96de" stroke-width="8"/><rect x="794" y="138" width="54" height="54" fill="#a9d4f5" stroke="#3a96de" stroke-width="8"/></svg>
<div class="a" style="left:95px;top:294px;width:188px;height:25px;background:#fff;border:1px solid #d9d9d9;"></div>
<div class="a" style="left:257px;top:295px;width:1px;height:23px;background:#e5e5e5;"></div>
<div class="a" style="left:293px;top:294px;width:30px;height:25px;background:#fff;border:1px solid #d9d9d9;clip-path:inset(0 7px 0 0);"></div>
<span class="t" style="left:127.30px;top:300.13px;color:#000;font-size:9.3px;letter-spacing:0.507px;">code</span>
<svg class="a" style="left:10.3px;top:291.3px;" width="120.00000000000001" height="30.0" viewBox="0 0 1024 256"><path d="M150 132 H72 M104 100 L72 132 L104 164" fill="none" stroke="#828282" stroke-width="11"/><path d="M278 132 H356 M324 100 L356 132 L324 164" fill="none" stroke="#828282" stroke-width="11"/><path d="M463 119 L484 138 L505 119" fill="none" stroke="#828282" stroke-width="6" opacity="0.8"/><path d="M628 180 V102 M592 138 L628 102 L664 138" fill="none" stroke="#505050" stroke-width="11"/><rect x="755" y="70" width="80" height="110" rx="4" fill="#ffe896" stroke="#f3d26f" stroke-width="4"/><rect x="823" y="132" width="22" height="48" rx="3" fill="#fbdc7e" stroke="#f0cc62" stroke-width="3"/></svg>
<svg class="a" style="left:230.5px;top:291.3px;clip-path:inset(0 35.3px 0 0);" width="120.0" height="30.0" viewBox="0 0 1024 256"><path d="M110 122 L138 150 L166 122" fill="none" stroke="#555" stroke-width="11"/><path d="M346 108 A30 30 0 1 0 372 120" fill="none" stroke="#5e5e5e" stroke-width="10"/><path d="M328 100 H356 V128" fill="none" stroke="#5e5e5e" stroke-width="9"/><circle cx="688" cy="118" r="21" fill="none" stroke="#8a8a9a" stroke-width="6"/><path d="M673 135 L636 174" stroke="#8a8a9a" stroke-width="7" fill="none"/></svg>
<svg class="a" style="left:155.8px;top:302.8px" width="6" height="8" viewBox="0 0 6 8"><path d="M1.8 1.6 L4.3 4 L1.8 6.4" fill="none" stroke="#484848" stroke-width="1.15"/></svg>
<svg class="a" style="left:114px;top:302px" width="9" height="8" viewBox="0 0 9 8"><path d="M4 1.6 L1.6 4 L4 6.4 M7.6 1.6 L5.2 4 L7.6 6.4" fill="none" stroke="#5a5a5a" stroke-width="0.9"/></svg>
<span class="t" style="left:166.90px;top:300.13px;color:#000;font-size:9.3px;letter-spacing:0.040px;">my_er...</span>
<div class="a" style="left:8px;top:326px;width:308px;height:1px;background:#e3e3e3;"></div>
<div class="a" style="left:40.5px;top:327px;width:13px;height:195px;background:#f0f0f0;"></div>
<div class="a" style="left:40.5px;top:430.5px;width:13px;height:14px;background:#cdcdcd;"></div>
<div class="a" style="left:302px;top:327px;width:12.6px;height:195px;background:#f0f0f0;"></div>
<div class="a" style="left:302px;top:398px;width:12.6px;height:108.5px;background:#cdcdcd;"></div>
<div class="a" style="left:68.5px;top:330px;width:86.5px;height:94.5px;background:#cce8ff;"></div>
<div class="a" style="left:185px;top:330px;width:86px;height:94.5px;background:#cce8ff;"></div>
<div class="a" style="left:68.5px;top:425.5px;width:86.5px;height:96.5px;background:#cce8ff;"></div>
<div class="a" style="left:185px;top:425.5px;width:86px;height:96.5px;background:#cce8ff;border:1px solid #99d1ff;"></div>
<svg class="a" style="left:72px;top:332px;" width="78" height="76" viewBox="0 0 564 550"><defs><filter id="bl" x="-5%" y="-5%" width="110%" height="110%"><feGaussianBlur stdDeviation="8"/></filter><clipPath id="bc"><rect x="10" y="12" width="538" height="523"/></clipPath></defs><rect x="10" y="12" width="538" height="523" fill="#363636"/><g clip-path="url(#bc)"><g filter="url(#bl)" fill="#efefef"><ellipse cx="140" cy="25" rx="22" ry="14"/><ellipse cx="238" cy="42" rx="30" ry="32"/><ellipse cx="335" cy="35" rx="25" ry="28"/><ellipse cx="425" cy="45" rx="22" ry="22"/><ellipse cx="528" cy="45" rx="22" ry="35"/><ellipse cx="105" cy="68" rx="18" ry="20"/><ellipse cx="295" cy="62" rx="10" ry="12"/><ellipse cx="472" cy="70" rx="18" ry="25"/><ellipse cx="165" cy="100" rx="28" ry="38" transform="rotate(25 165 100)"/><ellipse cx="375" cy="85" rx="28" ry="32"/><ellipse cx="500" cy="112" rx="18" ry="22"/><ellipse cx="68" cy="130" rx="28" ry="30"/><ellipse cx="300" cy="128" rx="25" ry="30"/><ellipse cx="420" cy="135" rx="17" ry="40" transform="rotate(20 420 135)"/><ellipse cx="28" cy="100" rx="8" ry="12"/><ellipse cx="220" cy="165" rx="22" ry="30"/><ellipse cx="462" cy="160" rx="18" ry="22"/><ellipse cx="525" cy="165" rx="25" ry="28"/><ellipse cx="362" cy="165" rx="15" ry="18"/><ellipse cx="85" cy="192" rx="22" ry="22"/><ellipse cx="145" cy="190" rx="25" ry="28"/><ellipse cx="268" cy="192" rx="20" ry="20"/><ellipse cx="300" cy="182" rx="18" ry="16"/><ellipse cx="28" cy="215" rx="22" ry="32"/><ellipse cx="358" cy="215" rx="22" ry="24"/><ellipse cx="395" cy="230" rx="22" ry="22"/><ellipse cx="478" cy="212" rx="22" ry="22"/><ellipse cx="538" cy="232" rx="12" ry="22"/><ellipse cx="225" cy="245" rx="28" ry="25"/><ellipse cx="88" cy="268" rx="28" ry="32"/><ellipse cx="142" cy="270" rx="18" ry="20"/><ellipse cx="282" cy="265" rx="19" ry="26" transform="rotate(15 282 265)"/><ellipse cx="262" cy="308" rx="18" ry="18"/><ellipse cx="345" cy="270" rx="20" ry="22"/><ellipse cx="365" cy="300" rx="22" ry="20"/><ellipse cx="478" cy="278" rx="30" ry="30"/><ellipse cx="28" cy="305" rx="15" ry="20"/><ellipse cx="150" cy="320" rx="18" ry="20"/><ellipse cx="205" cy="322" rx="20" ry="25"/><ellipse cx="528" cy="330" rx="25" ry="32"/><ellipse cx="405" cy="340" rx="15" ry="18"/><ellipse cx="300" cy="355" rx="28" ry="28"/><ellipse cx="192" cy="375" rx="25" ry="28"/><ellipse cx="42" cy="368" rx="22" ry="28"/><ellipse cx="102" cy="372" rx="22" ry="28"/><ellipse cx="460" cy="362" rx="20" ry="22"/><ellipse cx="385" cy="390" rx="30" ry="32"/><ellipse cx="498" cy="398" rx="25" ry="25"/><ellipse cx="282" cy="425" rx="30" ry="28"/><ellipse cx="440" cy="438" rx="15" ry="20"/><ellipse cx="222" cy="460" rx="30" ry="32" transform="rotate(-20 222 460)"/><ellipse cx="62" cy="455" rx="22" ry="32" transform="rotate(-15 62 455)"/><ellipse cx="138" cy="468" rx="25" ry="30"/><ellipse cx="20" cy="488" rx="12" ry="22"/><ellipse cx="500" cy="490" rx="30" ry="28"/><ellipse cx="372" cy="490" rx="26" ry="26"/><ellipse cx="410" cy="496" rx="24" ry="22"/><ellipse cx="298" cy="500" rx="18" ry="22"/><ellipse cx="105" cy="515" rx="15" ry="18"/><ellipse cx="545" cy="430" rx="8" ry="15"/><ellipse cx="170" cy="530" rx="15" ry="8"/></g></g></svg>
<svg class="a" style="left:176px;top:326px;" width="104" height="104" viewBox="0 0 550 550"><defs>
<linearGradient id="nca" x1="0.35" y1="0" x2="0.45" y2="1"><stop offset="0" stop-color="#d3ebf3"/><stop offset="0.4" stop-color="#95d0e1"/><stop offset="1" stop-color="#49aecb"/></linearGradient>
<linearGradient id="nba" x1="0" y1="0" x2="1" y2="0"><stop offset="0" stop-color="#cfae72"/><stop offset="1" stop-color="#a98548"/></linearGradient>
<clipPath id="npa"><path d="M413 133 L420 388 L374 427 L150 366 L300 388 Z"/></clipPath>
</defs><path d="M416 106 L438 112 L453 372 L414 392 Z" fill="url(#nba)"/><path d="M413 133 L420 388 L374 427 L150 366 L168 350 L300 388 Z" fill="#f3f5f6" stroke="#d4d8da" stroke-width="2"/><g clip-path="url(#npa)" stroke="#cfdbe2" stroke-width="2"><path d="M300 150.0 L445 164.0"/><path d="M300 160.5 L445 174.5"/><path d="M300 171.0 L445 185.0"/><path d="M300 181.5 L445 195.5"/><path d="M300 192.0 L445 206.0"/><path d="M300 202.5 L445 216.5"/><path d="M300 213.0 L445 227.0"/><path d="M300 223.5 L445 237.5"/><path d="M300 234.0 L445 248.0"/><path d="M300 244.5 L445 258.5"/><path d="M300 255.0 L445 269.0"/><path d="M300 265.5 L445 279.5"/><path d="M300 276.0 L445 290.0"/><path d="M300 286.5 L445 300.5"/><path d="M300 297.0 L445 311.0"/><path d="M300 307.5 L445 321.5"/><path d="M300 318.0 L445 332.0"/><path d="M300 328.5 L445 342.5"/><path d="M300 339.0 L445 353.0"/><path d="M300 349.5 L445 363.5"/><path d="M300 360.0 L445 374.0"/><path d="M300 370.5 L445 384.5"/><path d="M300 381.0 L445 395.0"/><path d="M300 391.5 L445 405.5"/><path d="M300 402.0 L445 416.0"/><path d="M300 412.5 L445 426.5"/></g><path d="M374 427 L420 388 L419 340 L366 410 Z" fill="#dfe3e5" opacity="0.8"/><path d="M212 76 L415 133 L306 380 Q298 392 284 388 L74 328 Q62 322 68 312 L196 82 Q203 72 212 76 Z" fill="url(#nca)" stroke="#7fc1d6" stroke-width="2"/><path d="M203 74 L330 110 L150 350 L74 328 Q62 322 68 312 Z" fill="#fff" opacity="0.16"/><path d="M180 130 L400 168 L380 212 L150 196 Z" fill="#fff" opacity="0.14"/><ellipse cx="212.0" cy="76.0" rx="4.2" ry="11" fill="none" stroke="#6f6f6f" stroke-width="3.8" transform="rotate(14 212.0 76.0)"/><circle cx="213.0" cy="89.0" r="3" fill="#6b7f88"/><ellipse cx="224.4" cy="79.0" rx="4.2" ry="11" fill="none" stroke="#6f6f6f" stroke-width="3.8" transform="rotate(14 224.4 79.0)"/><circle cx="225.4" cy="92.0" r="3" fill="#6b7f88"/><ellipse cx="236.8" cy="82.1" rx="4.2" ry="11" fill="none" stroke="#6f6f6f" stroke-width="3.8" transform="rotate(14 236.8 82.1)"/><circle cx="237.8" cy="95.1" r="3" fill="#6b7f88"/><ellipse cx="249.2" cy="85.2" rx="4.2" ry="11" fill="none" stroke="#6f6f6f" stroke-width="3.8" transform="rotate(14 249.2 85.2)"/><circle cx="250.2" cy="98.2" r="3" fill="#6b7f88"/><ellipse cx="261.6" cy="88.2" rx="4.2" ry="11" fill="none" stroke="#6f6f6f" stroke-width="3.8" transform="rotate(14 261.6 88.2)"/><circle cx="262.6" cy="101.2" r="3" fill="#6b7f88"/><ellipse cx="274.0" cy="91.2" rx="4.2" ry="11" fill="none" stroke="#6f6f6f" stroke-width="3.8" transform="rotate(14 274.0 91.2)"/><circle cx="275.0" cy="104.2" r="3" fill="#6b7f88"/><ellipse cx="286.4" cy="94.3" rx="4.2" ry="11" fill="none" stroke="#6f6f6f" stroke-width="3.8" transform="rotate(14 286.4 94.3)"/><circle cx="287.4" cy="107.3" r="3" fill="#6b7f88"/><ellipse cx="298.8" cy="97.3" rx="4.2" ry="11" fill="none" stroke="#6f6f6f" stroke-width="3.8" transform="rotate(14 298.8 97.3)"/><circle cx="299.8" cy="110.3" r="3" fill="#6b7f88"/><ellipse cx="311.2" cy="100.4" rx="4.2" ry="11" fill="none" stroke="#6f6f6f" stroke-width="3.8" transform="rotate(14 311.2 100.4)"/><circle cx="312.2" cy="113.4" r="3" fill="#6b7f88"/><ellipse cx="323.6" cy="103.5" rx="4.2" ry="11" fill="none" stroke="#6f6f6f" stroke-width="3.8" transform="rotate(14 323.6 103.5)"/><circle cx="324.6" cy="116.5" r="3" fill="#6b7f88"/><ellipse cx="336.0" cy="106.5" rx="4.2" ry="11" fill="none" stroke="#6f6f6f" stroke-width="3.8" transform="rotate(14 336.0 106.5)"/><circle cx="337.0" cy="119.5" r="3" fill="#6b7f88"/><ellipse cx="348.4" cy="109.5" rx="4.2" ry="11" fill="none" stroke="#6f6f6f" stroke-width="3.8" transform="rotate(14 348.4 109.5)"/><circle cx="349.4" cy="122.5" r="3" fill="#6b7f88"/><ellipse cx="360.8" cy="112.6" rx="4.2" ry="11" fill="none" stroke="#6f6f6f" stroke-width="3.8" transform="rotate(14 360.8 112.6)"/><circle cx="361.8" cy="125.6" r="3" fill="#6b7f88"/><ellipse cx="373.2" cy="115.7" rx="4.2" ry="11" fill="none" stroke="#6f6f6f" stroke-width="3.8" transform="rotate(14 373.2 115.7)"/><circle cx="374.2" cy="128.7" r="3" fill="#6b7f88"/><ellipse cx="385.6" cy="118.7" rx="4.2" ry="11" fill="none" stroke="#6f6f6f" stroke-width="3.8" transform="rotate(14 385.6 118.7)"/><circle cx="386.6" cy="131.7" r="3" fill="#6b7f88"/><ellipse cx="398.0" cy="121.8" rx="4.2" ry="11" fill="none" stroke="#6f6f6f" stroke-width="3.8" transform="rotate(14 398.0 121.8)"/><circle cx="399.0" cy="134.8" r="3" fill="#6b7f88"/><ellipse cx="410.4" cy="124.8" rx="4.2" ry="11" fill="none" stroke="#6f6f6f" stroke-width="3.8" transform="rotate(14 410.4 124.8)"/><circle cx="411.4" cy="137.8" r="3" fill="#6b7f88"/></svg>
<svg class="a" style="left:59.5px;top:421.8px;" width="104.0" height="103.99999999999994" viewBox="0 0 550 550"><defs>
<linearGradient id="ncb" x1="0.35" y1="0" x2="0.45" y2="1"><stop offset="0" stop-color="#d3ebf3"/><stop offset="0.4" stop-color="#95d0e1"/><stop offset="1" stop-color="#49aecb"/></linearGradient>
<linearGradient id="nbb" x1="0" y1="0" x2="1" y2="0"><stop offset="0" stop-color="#cfae72"/><stop offset="1" stop-color="#a98548"/></linearGradient>
<clipPath id="npb"><path d="M413 133 L420 388 L374 427 L150 366 L300 388 Z"/></clipPath>
</defs><path d="M416 106 L438 112 L453 372 L414 392 Z" fill="url(#nbb)"/><path d="M413 133 L420 388 L374 427 L150 366 L168 350 L300 388 Z" fill="#f3f5f6" stroke="#d4d8da" stroke-width="2"/><g clip-path="url(#npb)" stroke="#cfdbe2" stroke-width="2"><path d="M300 150.0 L445 164.0"/><path d="M300 160.5 L445 174.5"/><path d="M300 171.0 L445 185.0"/><path d="M300 181.5 L445 195.5"/><path d="M300 192.0 L445 206.0"/><path d="M300 202.5 L445 216.5"/><path d="M300 213.0 L445 227.0"/><path d="M300 223.5 L445 237.5"/><path d="M300 234.0 L445 248.0"/><path d="M300 244.5 L445 258.5"/><path d="M300 255.0 L445 269.0"/><path d="M300 265.5 L445 279.5"/><path d="M300 276.0 L445 290.0"/><path d="M300 286.5 L445 300.5"/><path d="M300 297.0 L445 311.0"/><path d="M300 307.5 L445 321.5"/><path d="M300 318.0 L445 332.0"/><path d="M300 328.5 L445 342.5"/><path d="M300 339.0 L445 353.0"/><path d="M300 349.5 L445 363.5"/><path d="M300 360.0 L445 374.0"/><path d="M300 370.5 L445 384.5"/><path d="M300 381.0 L445 395.0"/><path d="M300 391.5 L445 405.5"/><path d="M300 402.0 L445 416.0"/><path d="M300 412.5 L445 426.5"/></g><path d="M374 427 L420 388 L419 340 L366 410 Z" fill="#dfe3e5" opacity="0.8"/><path d="M212 76 L415 133 L306 380 Q298 392 284 388 L74 328 Q62 322 68 312 L196 82 Q203 72 212 76 Z" fill="url(#ncb)" stroke="#7fc1d6" stroke-width="2"/><path d="M203 74 L330 110 L150 350 L74 328 Q62 322 68 312 Z" fill="#fff" opacity="0.16"/><path d="M180 130 L400 168 L380 212 L150 196 Z" fill="#fff" opacity="0.14"/><ellipse cx="212.0" cy="76.0" rx="4.2" ry="11" fill="none" stroke="#6f6f6f" stroke-width="3.8" transform="rotate(14 212.0 76.0)"/><circle cx="213.0" cy="89.0" r="3" fill="#6b7f88"/><ellipse cx="224.4" cy="79.0" rx="4.2" ry="11" fill="none" stroke="#6f6f6f" stroke-width="3.8" transform="rotate(14 224.4 79.0)"/><circle cx="225.4" cy="92.0" r="3" fill="#6b7f88"/><ellipse cx="236.8" cy="82.1" rx="4.2" ry="11" fill="none" stroke="#6f6f6f" stroke-width="3.8" transform="rotate(14 236.8 82.1)"/><circle cx="237.8" cy="95.1" r="3" fill="#6b7f88"/><ellipse cx="249.2" cy="85.2" rx="4.2" ry="11" fill="none" stroke="#6f6f6f" stroke-width="3.8" transform="rotate(14 249.2 85.2)"/><circle cx="250.2" cy="98.2" r="3" fill="#6b7f88"/><ellipse cx="261.6" cy="88.2" rx="4.2" ry="11" fill="none" stroke="#6f6f6f" stroke-width="3.8" transform="rotate(14 261.6 88.2)"/><circle cx="262.6" cy="101.2" r="3" fill="#6b7f88"/><ellipse cx="274.0" cy="91.2" rx="4.2" ry="11" fill="none" stroke="#6f6f6f" stroke-width="3.8" transform="rotate(14 274.0 91.2)"/><circle cx="275.0" cy="104.2" r="3" fill="#6b7f88"/><ellipse cx="286.4" cy="94.3" rx="4.2" ry="11" fill="none" stroke="#6f6f6f" stroke-width="3.8" transform="rotate(14 286.4 94.3)"/><circle cx="287.4" cy="107.3" r="3" fill="#6b7f88"/><ellipse cx="298.8" cy="97.3" rx="4.2" ry="11" fill="none" stroke="#6f6f6f" stroke-width="3.8" transform="rotate(14 298.8 97.3)"/><circle cx="299.8" cy="110.3" r="3" fill="#6b7f88"/><ellipse cx="311.2" cy="100.4" rx="4.2" ry="11" fill="none" stroke="#6f6f6f" stroke-width="3.8" transform="rotate(14 311.2 100.4)"/><circle cx="312.2" cy="113.4" r="3" fill="#6b7f88"/><ellipse cx="323.6" cy="103.5" rx="4.2" ry="11" fill="none" stroke="#6f6f6f" stroke-width="3.8" transform="rotate(14 323.6 103.5)"/><circle cx="324.6" cy="116.5" r="3" fill="#6b7f88"/><ellipse cx="336.0" cy="106.5" rx="4.2" ry="11" fill="none" stroke="#6f6f6f" stroke-width="3.8" transform="rotate(14 336.0 106.5)"/><circle cx="337.0" cy="119.5" r="3" fill="#6b7f88"/><ellipse cx="348.4" cy="109.5" rx="4.2" ry="11" fill="none" stroke="#6f6f6f" stroke-width="3.8" transform="rotate(14 348.4 109.5)"/><circle cx="349.4" cy="122.5" r="3" fill="#6b7f88"/><ellipse cx="360.8" cy="112.6" rx="4.2" ry="11" fill="none" stroke="#6f6f6f" stroke-width="3.8" transform="rotate(14 360.8 112.6)"/><circle cx="361.8" cy="125.6" r="3" fill="#6b7f88"/><ellipse cx="373.2" cy="115.7" rx="4.2" ry="11" fill="none" stroke="#6f6f6f" stroke-width="3.8" transform="rotate(14 373.2 115.7)"/><circle cx="374.2" cy="128.7" r="3" fill="#6b7f88"/><ellipse cx="385.6" cy="118.7" rx="4.2" ry="11" fill="none" stroke="#6f6f6f" stroke-width="3.8" transform="rotate(14 385.6 118.7)"/><circle cx="386.6" cy="131.7" r="3" fill="#6b7f88"/><ellipse cx="398.0" cy="121.8" rx="4.2" ry="11" fill="none" stroke="#6f6f6f" stroke-width="3.8" transform="rotate(14 398.0 121.8)"/><circle cx="399.0" cy="134.8" r="3" fill="#6b7f88"/><ellipse cx="410.4" cy="124.8" rx="4.2" ry="11" fill="none" stroke="#6f6f6f" stroke-width="3.8" transform="rotate(14 410.4 124.8)"/><circle cx="411.4" cy="137.8" r="3" fill="#6b7f88"/></svg>
<svg class="a" style="left:176px;top:420px;" width="104" height="104" viewBox="0 0 550 550"><defs><linearGradient id="dg" x1="0" y1="0" x2="1" y2="1"><stop offset="0" stop-color="#fdfdfd"/><stop offset="1" stop-color="#ececec"/></linearGradient></defs><path d="M138 70 H330 L412 152 V434 H138 Z" fill="url(#dg)" stroke="#c9c9c9" stroke-width="3"/><path d="M330 70 V152 H412 Z" fill="#e3e3e3" stroke="#c9c9c9" stroke-width="2.5" stroke-linejoin="round"/><rect x="162" y="100.0" width="160" height="3.2" fill="#d6d6d6"/><rect x="162" y="113.9" width="160" height="3.2" fill="#d6d6d6"/><rect x="162" y="127.8" width="160" height="3.2" fill="#d6d6d6"/><rect x="162" y="141.7" width="160" height="3.2" fill="#d6d6d6"/><rect x="162" y="155.6" width="226" height="3.2" fill="#d6d6d6"/><rect x="162" y="169.5" width="226" height="3.2" fill="#d6d6d6"/><rect x="162" y="183.4" width="226" height="3.2" fill="#d6d6d6"/><rect x="162" y="197.3" width="226" height="3.2" fill="#d6d6d6"/><rect x="162" y="211.2" width="226" height="3.2" fill="#d6d6d6"/><rect x="162" y="225.1" width="226" height="3.2" fill="#d6d6d6"/><rect x="162" y="239.0" width="226" height="3.2" fill="#d6d6d6"/><rect x="162" y="252.9" width="226" height="3.2" fill="#d6d6d6"/><rect x="162" y="266.8" width="226" height="3.2" fill="#d6d6d6"/><rect x="162" y="280.7" width="226" height="3.2" fill="#d6d6d6"/><rect x="162" y="294.6" width="226" height="3.2" fill="#d6d6d6"/><rect x="162" y="308.5" width="226" height="3.2" fill="#d6d6d6"/><rect x="162" y="322.4" width="226" height="3.2" fill="#d6d6d6"/><rect x="162" y="336.3" width="226" height="3.2" fill="#d6d6d6"/><rect x="162" y="350.2" width="226" height="3.2" fill="#d6d6d6"/><rect x="162" y="364.1" width="226" height="3.2" fill="#d6d6d6"/><rect x="162" y="378.0" width="226" height="3.2" fill="#d6d6d6"/><rect x="162" y="391.9" width="226" height="3.2" fill="#d6d6d6"/><rect x="162" y="405.8" width="226" height="3.2" fill="#d6d6d6"/></svg>
<svg class="a" style="left:72px;top:331.5px" width="11" height="11" viewBox="0 0 11 11"><rect x="0.5" y="0.5" width="10" height="10" fill="#fff" stroke="#5c5c5c" stroke-width="1"/><path d="M2.3 5.6 L4.5 7.7 L8.7 3.2" fill="none" stroke="#3c3c3c" stroke-width="1.2"/></svg>
<svg class="a" style="left:188px;top:331.5px" width="11" height="11" viewBox="0 0 11 11"><rect x="0.5" y="0.5" width="10" height="10" fill="#fff" stroke="#5c5c5c" stroke-width="1"/><path d="M2.3 5.6 L4.5 7.7 L8.7 3.2" fill="none" stroke="#3c3c3c" stroke-width="1.2"/></svg>
<svg class="a" style="left:72px;top:428px" width="11" height="11" viewBox="0 0 11 11"><rect x="0.5" y="0.5" width="10" height="10" fill="#fff" stroke="#5c5c5c" stroke-width="1"/><path d="M2.3 5.6 L4.5 7.7 L8.7 3.2" fill="none" stroke="#3c3c3c" stroke-width="1.2"/></svg>
<svg class="a" style="left:188px;top:428px" width="11" height="11" viewBox="0 0 11 11"><rect x="0.5" y="0.5" width="10" height="10" fill="#fff" stroke="#5c5c5c" stroke-width="1"/><path d="M2.3 5.6 L4.5 7.7 L8.7 3.2" fill="none" stroke="#3c3c3c" stroke-width="1.2"/></svg>
<span class="t" style="left:94.90px;top:410.63px;color:#000;font-size:9.3px;letter-spacing:0.239px;">blobs.tif</span>
<span class="t" style="left:199.00px;top:411.13px;color:#000;font-size:9.3px;letter-spacing:0.331px;">my_library.py</span>
<span class="t" style="left:85.20px;top:507.23px;color:#000;font-size:9.3px;letter-spacing:0.143px;">my_script.py</span>
<span class="t" style="left:192.60px;top:507.23px;color:#000;font-size:9.3px;letter-spacing:0.334px;">requirements.txt</span>
<span class="t" style="left:19.00px;top:525.03px;color:#2a3f5f;font-size:9.3px;letter-spacing:0.290px;">6 items</span>
<span class="t" style="left:67.40px;top:525.03px;color:#2a3f5f;font-size:9.3px;letter-spacing:0.027px;">4 items selected&nbsp; 64.3 KB</span>
<div class="a" style="left:58px;top:524px;width:1px;height:15px;background:#ececec;"></div>
<div class="a" style="left:181.5px;top:524px;width:1px;height:15px;background:#ececec;"></div>
<svg class="a" style="left:266.2px;top:516px;" width="50.0" height="30" viewBox="0 0 917 550"><rect x="514" y="119" width="322" height="330" fill="#cce8f7" stroke="#35a3dc" stroke-width="18"/><rect x="236" y="189" width="66" height="188" fill="#fbfbfb" stroke="#9a9a9a" stroke-width="9"/><circle cx="268" cy="228" r="12" fill="#7bb48a"/><circle cx="268" cy="285" r="12" fill="#5b8cf0"/><circle cx="268" cy="342" r="12" fill="#e8505a"/><rect x="326" y="217" width="58" height="18" rx="4" fill="#8f8f8f"/><rect x="412" y="217" width="58" height="18" rx="4" fill="#8f8f8f"/><rect x="326" y="276" width="58" height="18" rx="4" fill="#5f5f5f"/><rect x="412" y="276" width="58" height="18" rx="4" fill="#5f5f5f"/><rect x="326" y="332" width="58" height="18" rx="4" fill="#8f8f8f"/><rect x="412" y="332" width="58" height="18" rx="4" fill="#8f8f8f"/><rect x="572" y="189" width="196" height="156" fill="#fff" stroke="#a5a5a5" stroke-width="10"/><rect x="590" y="207" width="160" height="40" fill="#4d96ea"/><path d="M590 312 Q600 250 660 262 Q720 276 750 300 V327 H590 Z" fill="#3f7f5a"/><path d="M590 300 Q640 290 700 310 L750 318 V327 H590 Z" fill="#2b5f8f"/></svg>
<svg class="a" style="left:40.9px;top:329.2px" width="12" height="12" viewBox="-6 -6 12 12"><path d="M-3.1 1.7 L0 -1.7 L3.1 1.7" fill="none" stroke="#505050" stroke-width="1.6"/></svg>
<svg class="a" style="left:40.9px;top:509px" width="12" height="12" viewBox="-6 -6 12 12"><path d="M-3.1 -1.7 L0 1.7 L3.1 -1.7" fill="none" stroke="#505050" stroke-width="1.6"/></svg>
<svg class="a" style="left:302.3px;top:328.8px" width="12" height="12" viewBox="-6 -6 12 12"><path d="M-3.1 1.7 L0 -1.7 L3.1 1.7" fill="none" stroke="#505050" stroke-width="1.6"/></svg>
<svg class="a" style="left:302.3px;top:509px" width="12" height="12" viewBox="-6 -6 12 12"><path d="M-3.1 -1.7 L0 1.7 L3.1 -1.7" fill="none" stroke="#505050" stroke-width="1.6"/></svg>
<svg class="a" style="left:270px;top:330px;" width="120" height="120" viewBox="0 0 120 120"><path d="M12.5 37.4 H59.6 V17.6 L107.6 58.9 L59.6 100.4 V80.2 H12.5 Z" fill="#22b14c" stroke="#22b14c" stroke-width="2" stroke-linejoin="round"/></svg>
</body></html>
